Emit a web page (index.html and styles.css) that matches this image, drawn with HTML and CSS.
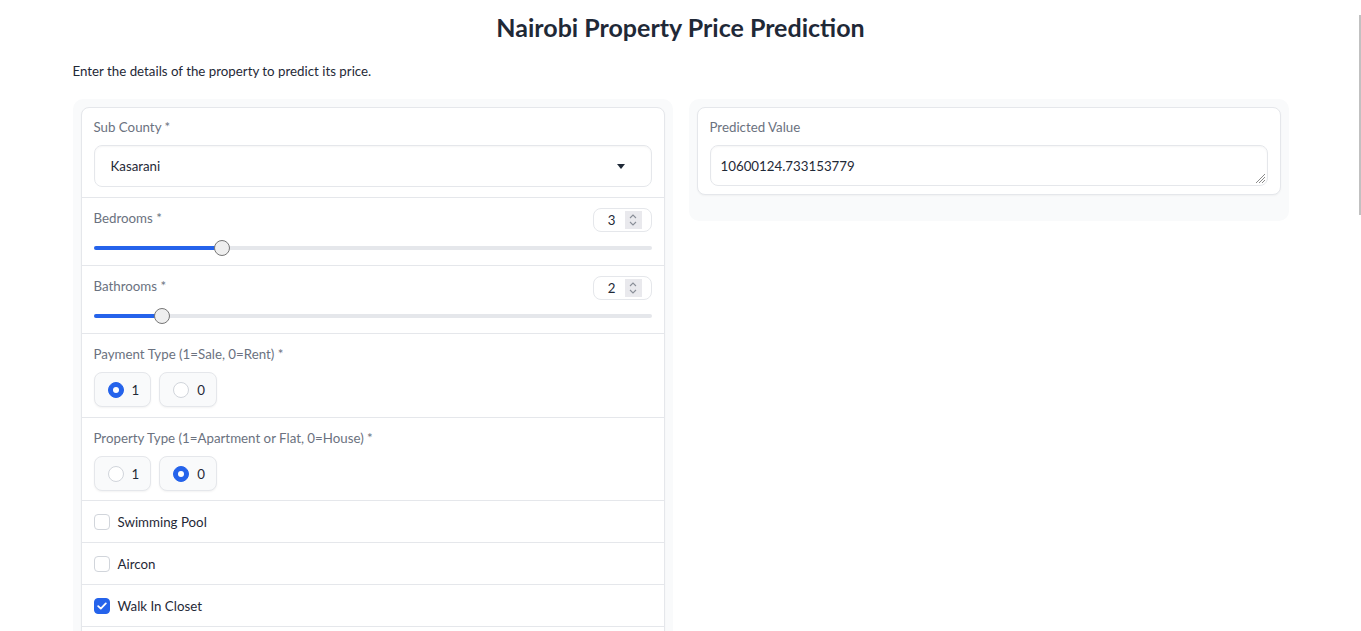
FILE: index.html
```html
<!DOCTYPE html>
<html>
<head>
<meta charset="utf-8">
<link rel="stylesheet" href="styles.css">
</head>
<body>
<div class="app">
  <h1 class="title">Nairobi Property Price Prediction</h1>
  <p class="desc">Enter the details of the property to predict its price.</p>
  <div class="columns">
    <div class="panel">
      <div class="form">
        <div class="item">
          <div class="label">Sub County *</div>
          <div class="dropdown">
            <span>Kasarani</span>
            <span class="caret"></span>
          </div>
        </div>
        <div class="item slider-item">
          <div class="slider-head">
            <div class="label">Bedrooms *</div>
            <div class="number"><span class="num-val">3</span><span class="spin"><svg width="10" height="14" viewBox="0 0 10 14"><path d="M2 5 L5 2 L8 5 M2 9 L5 12 L8 9" fill="none" stroke="#8a8f98" stroke-width="1.1"/></svg></span></div>
          </div>
          <div class="slider">
            <div class="track"><div class="fill" style="width:128px"></div></div>
            <div class="thumb" style="left:120px"></div>
          </div>
        </div>
        <div class="item slider-item">
          <div class="slider-head">
            <div class="label">Bathrooms *</div>
            <div class="number"><span class="num-val">2</span><span class="spin"><svg width="10" height="14" viewBox="0 0 10 14"><path d="M2 5 L5 2 L8 5 M2 9 L5 12 L8 9" fill="none" stroke="#8a8f98" stroke-width="1.1"/></svg></span></div>
          </div>
          <div class="slider">
            <div class="track"><div class="fill" style="width:68px"></div></div>
            <div class="thumb" style="left:60px"></div>
          </div>
        </div>
        <div class="item radio-item">
          <div class="label">Payment Type (1=Sale, 0=Rent) *</div>
          <div class="radios">
            <label class="radio"><span class="dot on"></span><span>1</span></label>
            <label class="radio"><span class="dot"></span><span>0</span></label>
          </div>
        </div>
        <div class="item radio-item radio-item-2">
          <div class="label">Property Type (1=Apartment or Flat, 0=House) *</div>
          <div class="radios">
            <label class="radio"><span class="dot"></span><span>1</span></label>
            <label class="radio"><span class="dot on"></span><span>0</span></label>
          </div>
        </div>
        <div class="item check-item">
          <span class="box"></span><span>Swimming Pool</span>
        </div>
        <div class="item check-item">
          <span class="box"></span><span>Aircon</span>
        </div>
        <div class="item check-item">
          <span class="box checked"><svg width="10" height="8" viewBox="0 0 10 8"><path d="M1.2 4.2 L3.8 6.6 L8.8 1.4" fill="none" stroke="#fff" stroke-width="1.8" stroke-linecap="round" stroke-linejoin="round"/></svg></span><span>Walk In Closet</span>
        </div>
        <div class="item check-item empty-item"></div>
      </div>
    </div>
    <div class="panel out-panel">
      <div class="form">
        <div class="item out-item">
          <div class="label">Predicted Value</div>
          <div class="textarea">
            <span>10600124.733153779</span>
            <svg class="grip" width="11" height="11" viewBox="0 0 11 11"><path d="M10 1 L1 10 M10 4 L4 10 M10 7 L7 10" stroke="#8c8c8c" stroke-width="1"/></svg>
          </div>
        </div>
      </div>
    </div>
  </div>
</div>
<div class="scrollbar"></div>
</body>
</html>
```

FILE: styles.css
```css
html, body {
  margin: 0;
  padding: 0;
  overflow: hidden;
  height: 100%;
  background: #ffffff;
}
body {
  font-family: "Lato", "Source Sans Pro", sans-serif;
  font-size: 13.3px;
  color: #1f2937;
}
.app {
  width: 1216px;
  margin: 0 auto;
}
.title {
  margin: 11px 0 0;
  font-size: 25px;
  line-height: 32px;
  font-weight: 700;
  text-align: center;
  color: #1f2937;
}
.desc {
  margin: 18px 0 0;
  line-height: 20px;
  color: #1f2937;
}
.columns {
  display: flex;
  gap: 16px;
  margin-top: 18px;
  align-items: flex-start;
}
.panel {
  flex: 1;
  background: #f9fafb;
  border-radius: 10px;
  padding: 8px;
}
.out-panel {
  padding-bottom: 26px;
}
.form {
  background: #fff;
  border: 1px solid #e5e7eb;
  border-radius: 8px;
  overflow: hidden;
  box-shadow: 0 1px 2px rgba(0,0,0,0.04);
}
.item {
  padding: 9px 12px 10px;
  border-top: 1px solid #e5e7eb;
}
.item:first-child {
  border-top: none;
}
.out-item {
  padding-bottom: 8px;
}
.slider-item {
  padding-bottom: 9px;
}
.radio-item {
  padding-top: 10px;
}
.radio-item-2 {
  padding-bottom: 9px;
}
.label {
  line-height: 20px;
  color: #6b7280;
  margin-bottom: 8px;
}
.dropdown, .textarea {
  height: 42px;
  box-sizing: border-box;
  border: 1px solid #e5e7eb;
  border-radius: 8px;
  box-shadow: inset 0 1px 2px rgba(0,0,0,0.04);
  display: flex;
  align-items: center;
  justify-content: space-between;
  color: #1f2937;
}
.dropdown {
  padding: 0 26px 0 16px;
}
.caret {
  width: 0;
  height: 0;
  border-left: 4.5px solid transparent;
  border-right: 4.5px solid transparent;
  border-top: 5px solid #1f2937;
}
.textarea {
  height: 41px;
  padding: 0 10px;
  position: relative;
}
.grip {
  position: absolute;
  right: 1px;
  bottom: 1px;
}
.slider-head {
  display: flex;
  justify-content: space-between;
  align-items: flex-start;
  height: 24px;
  padding-top: 1px;
}
.slider-head .label {
  margin: 0;
}
.number {
  width: 59px;
  height: 24px;
  box-sizing: border-box;
  border: 1px solid #e5e7eb;
  border-radius: 8px;
  display: flex;
  align-items: center;
  justify-content: flex-end;
  padding-right: 9px;
}
.num-val {
  margin-right: 9px;
  color: #1f2937;
}
.spin {
  width: 17px;
  height: 18px;
  background: #e9e9ed;
  display: flex;
  align-items: center;
  justify-content: center;
}
.slider {
  position: relative;
  height: 16px;
  margin-top: 8px;
}
.track {
  position: absolute;
  left: 0;
  right: 0;
  top: 6px;
  height: 4px;
  border-radius: 2px;
  background: #e5e7eb;
  overflow: hidden;
}
.fill {
  height: 100%;
  background: #2563eb;
}
.thumb {
  position: absolute;
  top: 0;
  width: 16px;
  height: 16px;
  box-sizing: border-box;
  border-radius: 50%;
  background: #efefef;
  border: 1px solid #767676;
}
.radios {
  display: flex;
  gap: 8px;
}
.radio {
  display: flex;
  align-items: center;
  gap: 8px;
  height: 35px;
  box-sizing: border-box;
  padding: 0 11px 0 13px;
  border: 1px solid #e5e7eb;
  border-radius: 8px;
  background: #f9fafb;
  box-shadow: 0 1px 2px rgba(0,0,0,0.05);
  color: #1f2937;
}
.dot {
  width: 16px;
  height: 16px;
  box-sizing: border-box;
  border-radius: 50%;
  border: 1px solid #d1d5db;
  background: #fff;
  position: relative;
}
.dot.on {
  background: #2563eb;
  border-color: #2563eb;
}
.dot.on::after {
  content: "";
  position: absolute;
  left: 4px;
  top: 4px;
  width: 6px;
  height: 6px;
  border-radius: 50%;
  background: #fff;
}
.check-item {
  display: flex;
  align-items: center;
  gap: 8px;
  padding: 11px 12px 10px;
  line-height: 20px;
  color: #1f2937;
}
.empty-item {
  height: 20px;
}
.box {
  width: 16px;
  height: 16px;
  box-sizing: border-box;
  border: 1px solid #d1d5db;
  border-radius: 4px;
  background: #fff;
  display: flex;
  align-items: center;
  justify-content: center;
}
.box.checked {
  background: #2563eb;
  border-color: #2563eb;
}
.scrollbar {
  position: fixed;
  right: 0;
  top: 15px;
  width: 2px;
  height: 200px;
  background: #c1c1c1;
}
```
